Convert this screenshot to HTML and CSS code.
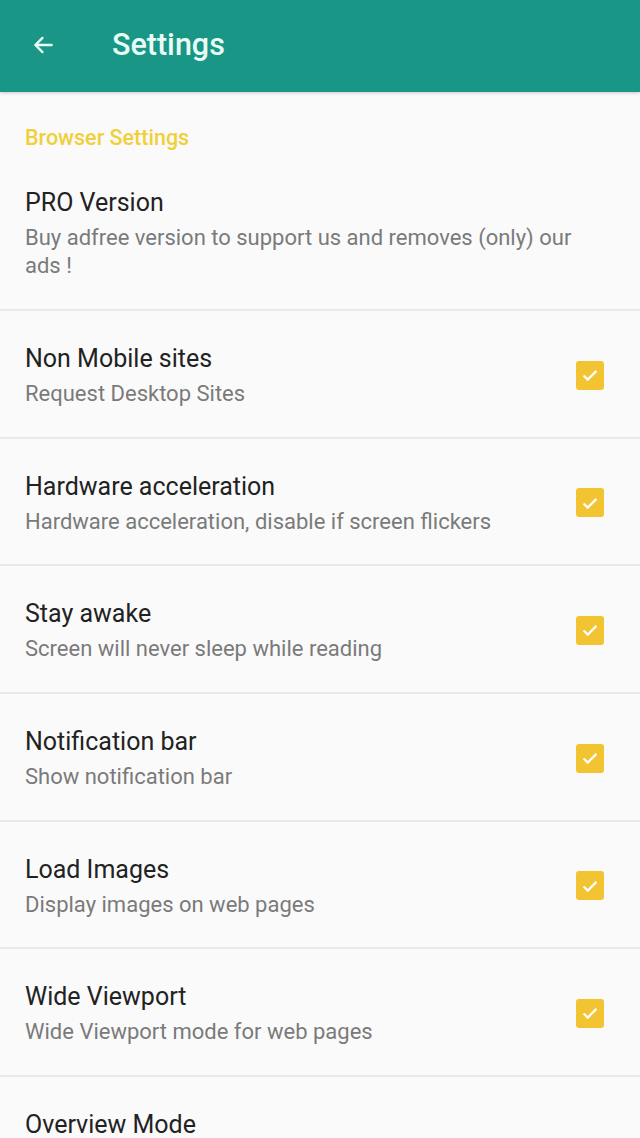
FILE: index.html
```html
<!DOCTYPE html>
<html>
<head>
<meta charset="utf-8">
<link rel="stylesheet" href="styles.css">
</head>
<body>
<header class="appbar">
  <svg class="back" width="26" height="26" viewBox="0 0 24 24"><path d="M20 12H5M11.5 5.5L5 12l6.5 6.5" fill="none" stroke="currentColor" stroke-width="2.2" stroke-linecap="round" stroke-linejoin="round"/></svg>
  <h1 class="title">Settings</h1>
</header>
<main class="list">
  <div class="section">Browser Settings</div>
  <div class="row first">
    <div class="text">
      <div class="t">PRO Version</div>
      <div class="s">Buy adfree version to support us and removes (only) our ads !</div>
    </div>
  </div>
  <div class="row">
    <div class="text"><div class="t">Non Mobile sites</div><div class="s">Request Desktop Sites</div></div>
    <span class="cb"><svg viewBox="0 0 24 24" width="22" height="22"><path d="M5 12.5l4.5 4.5L19 7.5" fill="none" stroke="#fff" stroke-width="2.4"/></svg></span>
  </div>
  <div class="row">
    <div class="text"><div class="t">Hardware acceleration</div><div class="s">Hardware acceleration, disable if screen flickers</div></div>
    <span class="cb"><svg viewBox="0 0 24 24" width="22" height="22"><path d="M5 12.5l4.5 4.5L19 7.5" fill="none" stroke="#fff" stroke-width="2.4"/></svg></span>
  </div>
  <div class="row">
    <div class="text"><div class="t">Stay awake</div><div class="s">Screen will never sleep while reading</div></div>
    <span class="cb"><svg viewBox="0 0 24 24" width="22" height="22"><path d="M5 12.5l4.5 4.5L19 7.5" fill="none" stroke="#fff" stroke-width="2.4"/></svg></span>
  </div>
  <div class="row">
    <div class="text"><div class="t">Notification bar</div><div class="s">Show notification bar</div></div>
    <span class="cb"><svg viewBox="0 0 24 24" width="22" height="22"><path d="M5 12.5l4.5 4.5L19 7.5" fill="none" stroke="#fff" stroke-width="2.4"/></svg></span>
  </div>
  <div class="row">
    <div class="text"><div class="t">Load Images</div><div class="s">Display images on web pages</div></div>
    <span class="cb"><svg viewBox="0 0 24 24" width="22" height="22"><path d="M5 12.5l4.5 4.5L19 7.5" fill="none" stroke="#fff" stroke-width="2.4"/></svg></span>
  </div>
  <div class="row">
    <div class="text"><div class="t">Wide Viewport</div><div class="s">Wide Viewport mode for web pages</div></div>
    <span class="cb"><svg viewBox="0 0 24 24" width="22" height="22"><path d="M5 12.5l4.5 4.5L19 7.5" fill="none" stroke="#fff" stroke-width="2.4"/></svg></span>
  </div>
  <div class="row last">
    <div class="text"><div class="t">Overview Mode</div></div>
  </div>
</main>
</body>
</html>
```
FILE: styles.css
```css
html, body {
  margin: 0;
  padding: 0;
  background: #fafafa;
  font-family: Roboto, "Liberation Sans", sans-serif;
  overflow: hidden;
  height: 1138px;
}
.appbar {
  height: 92px;
  background: #1a9687;
  display: flex;
  align-items: center;
  color: #e8fbf5;
  box-shadow: 0 1px 3px rgba(0,0,0,0.2);
}
.back {
  margin-left: 30px;
  margin-top: -2px;
  color: #eafcf6;
}
.title {
  margin: 0 0 0 56px;
  font-size: 30.5px;
  font-weight: 500;
  line-height: 36px;
  margin-top: -2px;
}
.list {
  display: flex;
  flex-direction: column;
}
.section {
  padding: 32px 25px 0;
  font-size: 21.5px;
  line-height: 28px;
  font-weight: 500;
  color: #f0d03a;
  margin-bottom: 34px;
}
.row {
  display: flex;
  align-items: center;
  padding: 31px 36px 28.7px 25px;
  border-top: 2px solid #e9e9e9;
}
.row.first {
  border-top: none;
  padding-top: 0;
  padding-bottom: 29px;
}
.row.last {
  padding-bottom: 0;
}
.text {
  flex: 1;
  min-width: 0;
}
.t {
  font-size: 25px;
  line-height: 34px;
  color: #222;
}
.s {
  margin-top: 4px;
  font-size: 22px;
  line-height: 28px;
  color: #7a7a7a;
}
.cb {
  width: 28px;
  height: 29px;
  border-radius: 3px;
  background: #f3c431;
  display: flex;
  align-items: center;
  justify-content: center;
  flex-shrink: 0;
}
```
